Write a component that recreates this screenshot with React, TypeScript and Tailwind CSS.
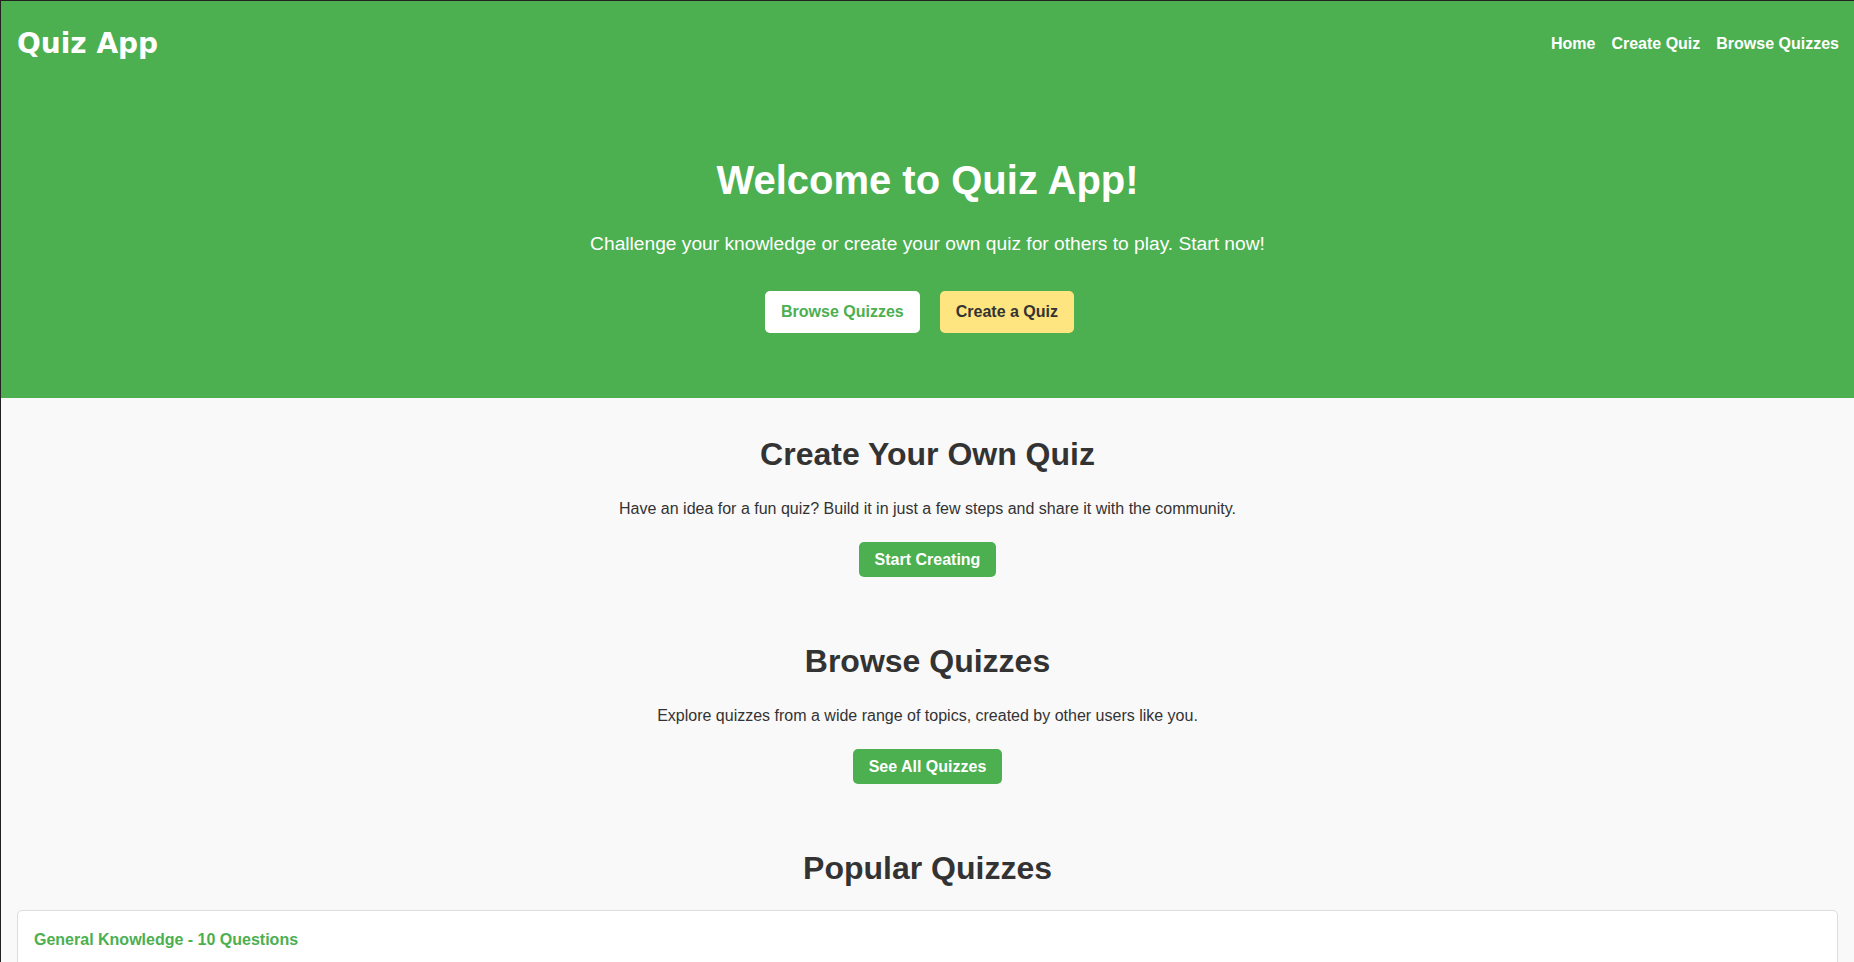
import { useState } from "react";

// Green #4CAF50 | Yellow #FFE57F | Text #333 | Surface #F9F9F9

interface Quiz {
  id: number;
  title: string;
  description: string;
}

const POPULAR: Quiz[] = [
  { id: 1, title: "General Knowledge - 10 Questions", description: "Test your knowledge on a variety of topics from history to science." },
  { id: 2, title: "Movie Trivia - 15 Questions", description: "How well do you know your favourite films and actors?" },
  { id: 3, title: "World Capitals - 20 Questions", description: "Name the capital cities of countries around the globe." },
];

const NAV = ["Home", "Create Quiz", "Browse Quizzes"];

export default function App() {
  const [active, setActive] = useState("Home");

  return (
    <div className="min-h-screen bg-[#f9f9f9] border-l border-t border-[#222] font-['Liberation_Sans',Arial,sans-serif] text-[#333]">
      {/* Header + hero */}
      <header className="bg-[#4CAF50] text-white">
        <nav className="h-[85px] pl-4 pr-[15px] flex items-center justify-between">
          <h1 className="font-['DejaVu_Sans',sans-serif] text-[28px] font-bold leading-none">Quiz App</h1>
          <ul className="flex gap-4 text-base font-bold">
            {NAV.map((item) => (
              <li key={item}>
                <a href="#" onClick={() => setActive(item)} className={active === item ? "text-white" : "text-white"}>
                  {item}
                </a>
              </li>
            ))}
          </ul>
        </nav>

        <div className="pt-[71px] pb-[65px] text-center">
          <h2 className="text-[40px] font-bold leading-[46px]">Welcome to Quiz App!</h2>
          <p className="mt-[30px] text-[19.2px] leading-[22px]">
            Challenge your knowledge or create your own quiz for others to play. Start now!
          </p>
          <div className="mt-[36px] pr-4 flex justify-center gap-5">
            <button className="bg-white text-[#4CAF50] font-bold text-base leading-[18px] px-4 py-3 rounded-[5px]">
              Browse Quizzes
            </button>
            <button className="bg-[#FFE57F] text-[#333] font-bold text-base leading-[18px] px-4 py-3 rounded-[5px]">
              Create a Quiz
            </button>
          </div>
        </div>
      </header>

      {/* Sections */}
      <main className="pt-[38px] text-center">
        <section>
          <h2 className="text-[32px] font-bold leading-[37px]">Create Your Own Quiz</h2>
          <p className="mt-[27px] text-base leading-[18px]">
            Have an idea for a fun quiz? Build it in just a few steps and share it with the community.
          </p>
          <button className="mt-6 bg-[#4CAF50] text-white font-bold text-base leading-[18px] px-4 py-[8.5px] rounded-[5px]">
            Start Creating
          </button>
        </section>

        <section className="mt-[66px]">
          <h2 className="text-[32px] font-bold leading-[37px]">Browse Quizzes</h2>
          <p className="mt-[27px] text-base leading-[18px]">
            Explore quizzes from a wide range of topics, created by other users like you.
          </p>
          <button className="mt-6 bg-[#4CAF50] text-white font-bold text-base leading-[18px] px-4 py-[8.5px] rounded-[5px]">
            See All Quizzes
          </button>
        </section>

        <section className="mt-[66px] pb-10">
          <h2 className="text-[32px] font-bold leading-[37px]">Popular Quizzes</h2>
          <div className="mt-[23px] px-4 flex flex-col gap-4 text-left">
            {POPULAR.map((quiz) => (
              <div key={quiz.id} className="bg-white border border-[#ddd] rounded-[5px] px-4 pt-[20px] pb-4">
                <h3 className="text-[#4CAF50] text-base font-bold leading-[18px]">{quiz.title}</h3>
                <p className="mt-5 text-base leading-[18px]">{quiz.description}</p>
                <button className="mt-4 bg-[#4CAF50] text-white font-bold text-base leading-[18px] px-4 py-[8.5px] rounded-[5px]">
                  Play Now
                </button>
              </div>
            ))}
          </div>
        </section>
      </main>
    </div>
  );
}
